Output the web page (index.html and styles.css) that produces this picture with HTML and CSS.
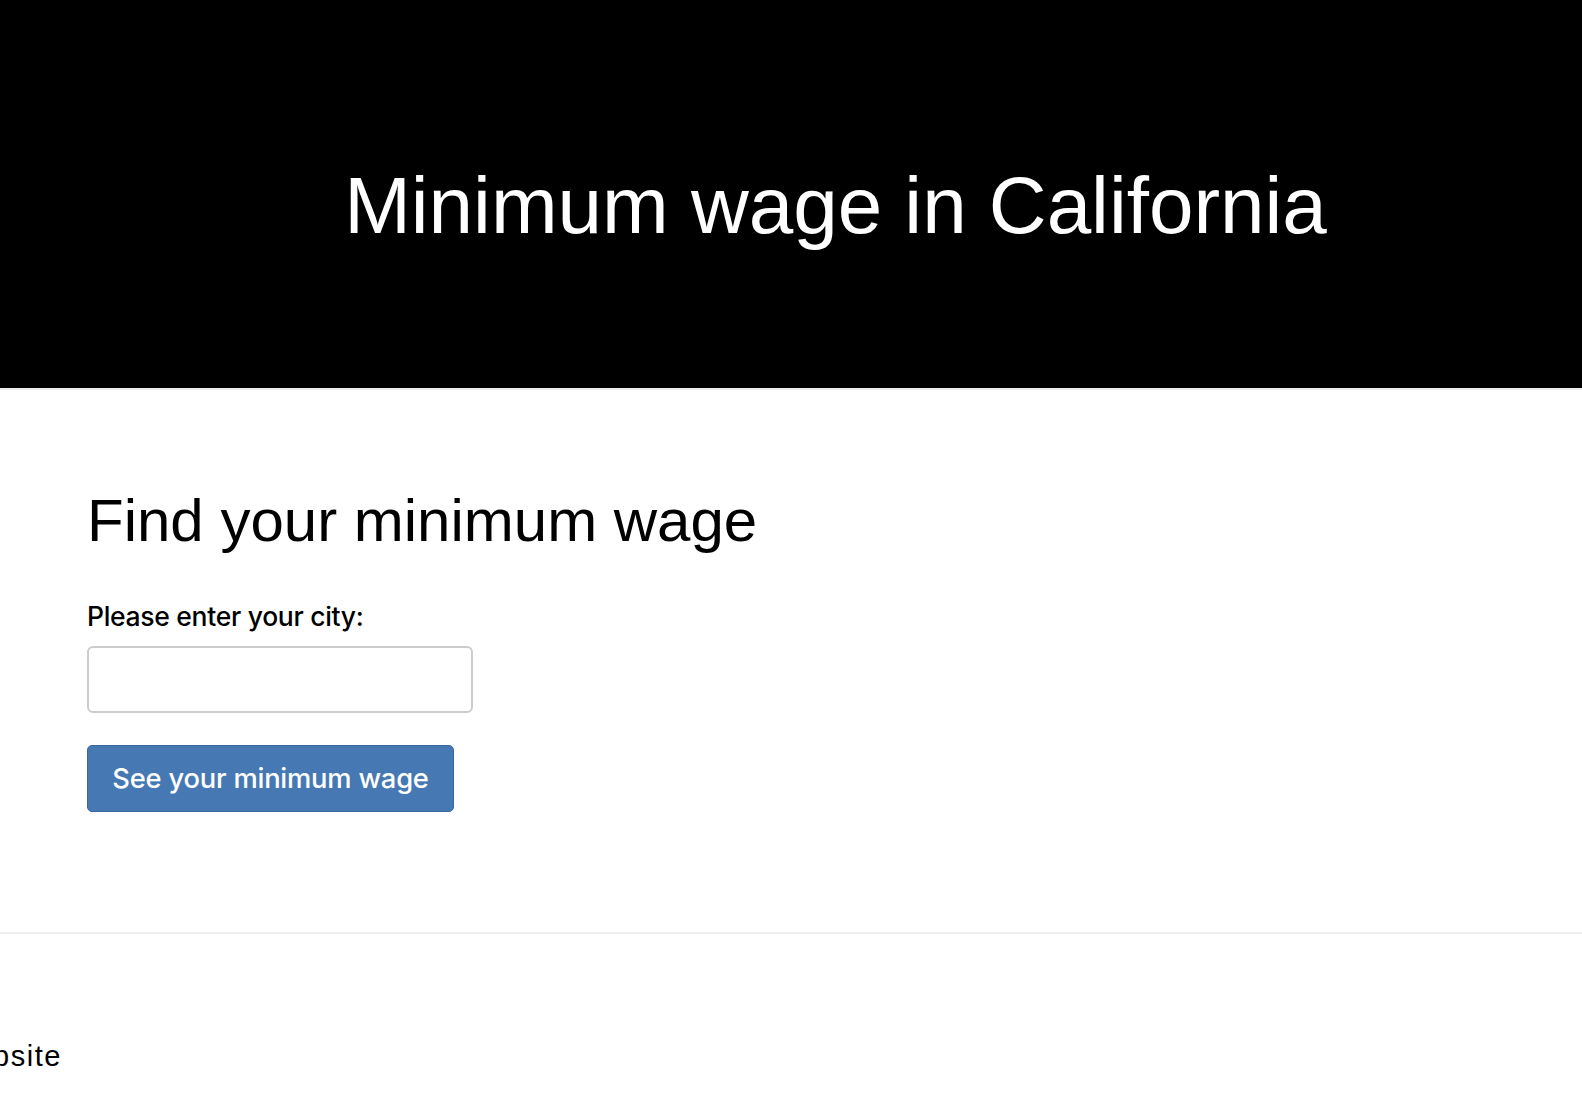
FILE: index.html
```html
<!DOCTYPE html>
<html lang="en">
<head>
<meta charset="utf-8">
<title>Minimum wage in California</title>
<link rel="stylesheet" href="styles.css">
</head>
<body>
<header class="hero">
  <h1 class="hero-title">Minimum wage in California</h1>
</header>
<main class="finder">
  <h2 class="finder-title">Find your minimum wage</h2>
  <form class="finder-form">
    <label class="finder-label" for="city">Please enter your city:</label>
    <input class="finder-input" id="city" type="text">
    <button class="finder-button" type="button">See your minimum wage</button>
  </form>
</main>
<footer class="footer">
  <p class="footer-text">website</p>
</footer>
</body>
</html>
```
FILE: styles.css
```css
html, body {
  margin: 0;
  padding: 0;
  background: #fff;
  color: #000;
  font-family: "Liberation Sans", Arial, sans-serif;
  overflow: hidden;
}

.hero {
  background: #000;
  height: 390px;
  box-sizing: border-box;
  padding: 160px 0 0 89px;
  border-bottom: 2px solid #eeeeee;
}

.hero-title {
  margin: 0;
  color: #fff;
  font-weight: 400;
  font-size: 80px;
  line-height: 92px;
  text-align: center;
}

.finder {
  padding: 96px 0 120px 87px;
  border-bottom: 2px solid #eeeeee;
}

.finder-title {
  margin: 0;
  font-weight: 400;
  font-size: 60px;
  line-height: 69px;
}

.finder-form {
  display: flex;
  flex-direction: column;
  align-items: flex-start;
  margin-top: 45px;
}

.finder-label {
  font-family: Inter, "Noto Sans", sans-serif;
  font-weight: 500;
  font-size: 26.5px;
  line-height: 32px;
  letter-spacing: -0.3px;
}

.finder-input {
  margin-top: 14px;
  width: 386px;
  height: 67px;
  box-sizing: border-box;
  border: 2px solid #cccccc;
  border-radius: 6px;
  background: #fff;
  font-size: 20px;
}

.finder-button {
  margin-top: 32px;
  width: 367px;
  height: 67px;
  box-sizing: border-box;
  background: #4679b3;
  border: 1px solid #3a679c;
  border-radius: 5px;
  color: #fff;
  font-family: Inter, "Noto Sans", sans-serif;
  font-weight: 500;
  font-size: 27.3px;
  letter-spacing: -0.2px;
  padding: 0;
  cursor: pointer;
}

.footer {
  padding-top: 106px;
}

.footer-text {
  margin: 0 0 0 -47px;
  font-size: 29px;
  line-height: 32px;
  letter-spacing: 1.5px;
}
```
